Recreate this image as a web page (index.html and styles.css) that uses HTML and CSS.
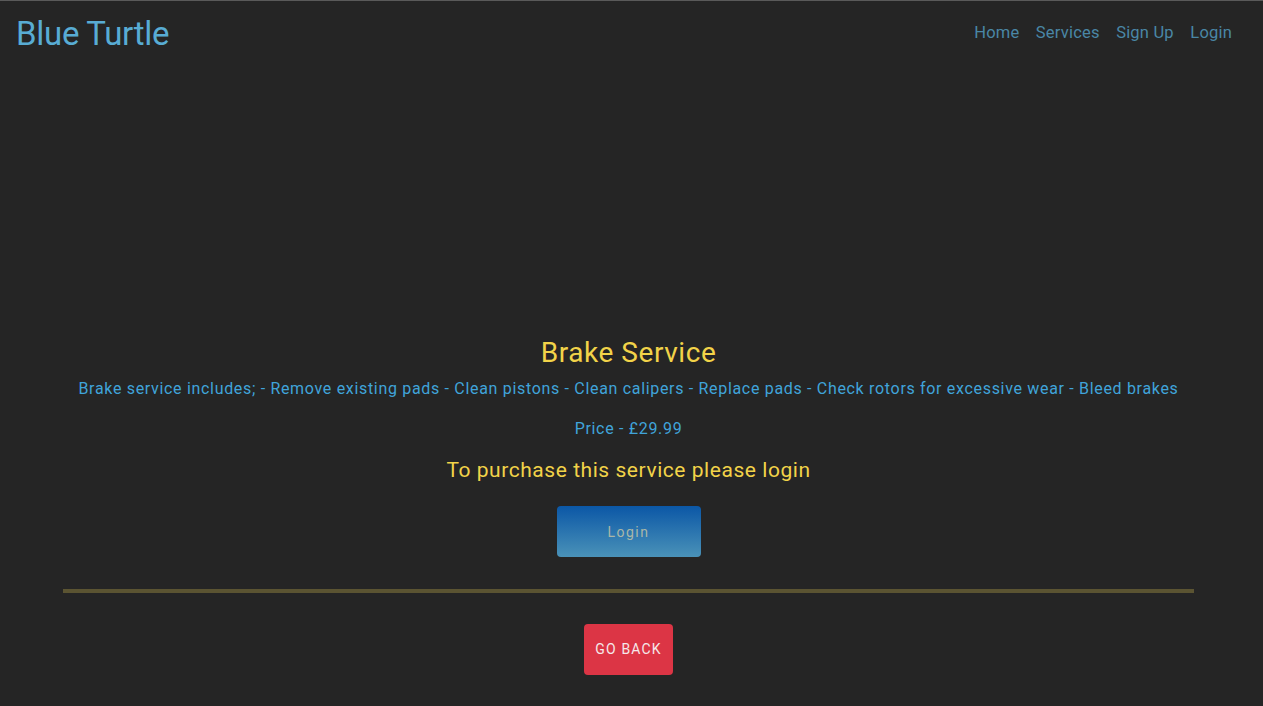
FILE: index.html
```html
<!DOCTYPE html>
<html>
<head>
<meta charset="utf-8">
<link rel="stylesheet" href="styles.css">
</head>
<body>
<header class="topbar">
  <a class="brand" href="#">Blue Turtle</a>
  <nav class="nav">
    <a href="#">Home</a>
    <a href="#">Services</a>
    <a href="#">Sign Up</a>
    <a href="#">Login</a>
  </nav>
</header>
<main class="content">
  <h2 class="title">Brake Service</h2>
  <p class="desc">Brake service includes; - Remove existing pads - Clean pistons - Clean calipers - Replace pads - Check rotors for excessive wear - Bleed brakes</p>
  <p class="price">Price - £29.99</p>
  <h4 class="notice">To purchase this service please login</h4>
  <a class="btn-login" href="#">Login</a>
  <hr class="divider">
  <a class="btn-back" href="#">Go Back</a>
</main>
</body>
</html>
```
FILE: styles.css
```css
html, body {
  margin: 0;
  padding: 0;
  background: #252525;
  font-family: Roboto, "Liberation Sans", sans-serif;
}
body {
  border-top: 1px solid #5a5a5a;
  min-height: 705px;
}
a { text-decoration: none; }
.topbar {
  display: flex;
  justify-content: space-between;
  align-items: center;
  height: 63px;
  padding: 0 31px 0 16px;
}
.brand {
  color: #58acd4;
  font-size: 33px;
  letter-spacing: -0.3px;
  margin-top: 2px;
}
.nav {
  display: flex;
  gap: 16.5px;
}
.nav a {
  color: #4a87a6;
  font-size: 16.5px;
  letter-spacing: 0.2px;
}
.content {
  width: 1131px;
  margin: 271px 0 0 63px;
  text-align: center;
}
.title {
  margin: 0;
  color: #f2d349;
  font-size: 28px;
  font-weight: 400;
  line-height: 36px;
  letter-spacing: 0.55px;
}
.desc {
  margin: 7px 0 0;
  color: #40a4da;
  font-size: 16px;
  line-height: 22px;
  letter-spacing: 0.68px;
}
.price {
  margin: 18px 0 0;
  color: #40a4da;
  font-size: 16px;
  line-height: 22px;
  letter-spacing: 0.68px;
}
.notice {
  margin: 16px 0 0;
  color: #f2d349;
  font-size: 21px;
  font-weight: 400;
  line-height: 28px;
  letter-spacing: 0.55px;
}
.btn-login {
  display: block;
  width: 144px;
  height: 51px;
  margin: 22px auto 0;
  border-radius: 4px;
  background: linear-gradient(to bottom, #0b57a6, #4a92b8);
  color: #a9b7a8;
  font-size: 14px;
  line-height: 53px;
  letter-spacing: 1.5px;
}
.divider {
  margin: 32px 0 0;
  border: 0;
  height: 4px;
  background: #5b5432;
}
.btn-back {
  display: inline-block;
  width: 89px;
  height: 51px;
  margin-top: 31px;
  border-radius: 4px;
  background: #dc3545;
  color: #f5e8ea;
  font-size: 14px;
  line-height: 51px;
  letter-spacing: 1.2px;
  text-transform: uppercase;
}
```
